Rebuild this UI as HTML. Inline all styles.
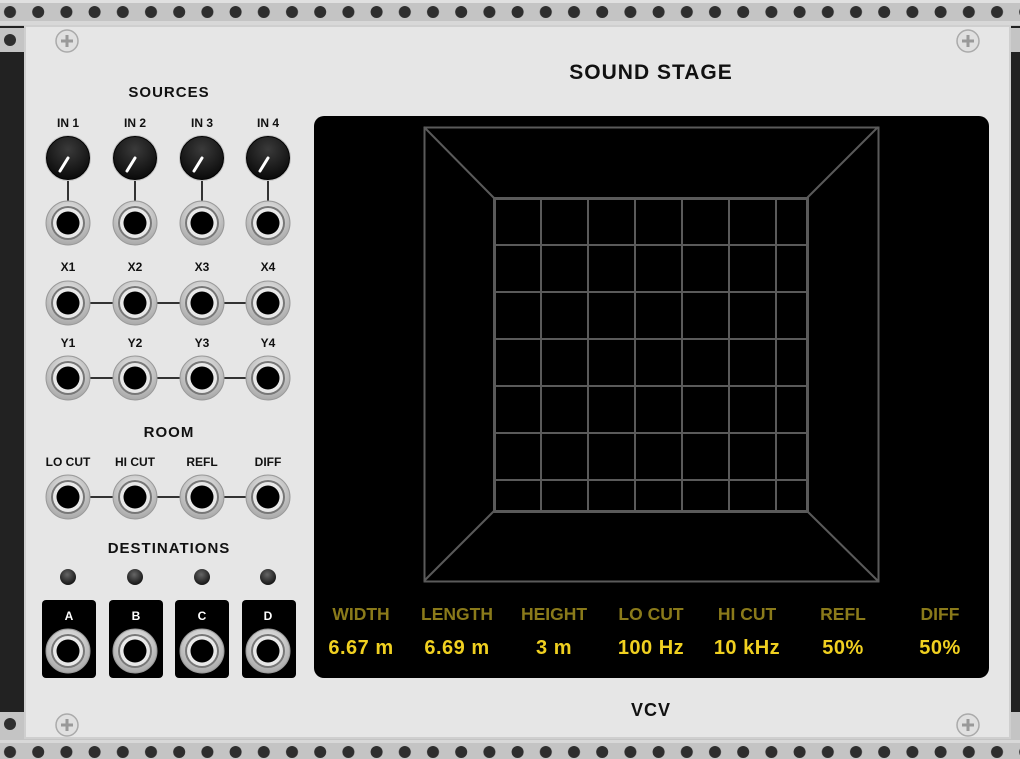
<!DOCTYPE html>
<html><head><style>
html,body{margin:0;padding:0;width:1020px;height:759px;overflow:hidden;background:#2a2a2a}
svg text{font-family:"Liberation Sans",sans-serif;font-weight:bold}
</style></head><body>
<svg width="1020" height="759" viewBox="0 0 1020 759" xmlns="http://www.w3.org/2000/svg">
<defs>
<radialGradient id="jg" cx="50%" cy="35%" r="65%"><stop offset="0" stop-color="#f4f4f4"/><stop offset="1" stop-color="#a8a8a8"/></radialGradient>
<radialGradient id="kg" cx="50%" cy="30%" r="70%"><stop offset="0" stop-color="#3a3a3a"/><stop offset="1" stop-color="#0a0a0a"/></radialGradient>
<radialGradient id="lg" cx="45%" cy="35%" r="60%"><stop offset="0" stop-color="#666"/><stop offset="1" stop-color="#1a1a1a"/></radialGradient>
<g id="jack">
<circle r="22" fill="url(#jg)" stroke="#999" stroke-width="1"/>
<circle r="17" fill="#777"/>
<circle r="15" fill="#e8e8e8"/>
<circle r="11.5" fill="#000"/>
</g>
<g id="knob">
<circle r="23" fill="#c4c4c4"/>
<circle r="21.5" fill="url(#kg)" stroke="#000" stroke-width="1"/>
<line x1="0" y1="0" x2="-8" y2="13" stroke="#fff" stroke-width="3" stroke-linecap="round"/>
</g>
<g id="screw"><circle r="11" fill="#e0e0e0" stroke="#aaa" stroke-width="1.5"/><path d="M-6 0H6M0 -6V6" stroke="#999" stroke-width="3"/></g>
<pattern id="holesT" x="-4" y="5" width="28.2" height="14" patternUnits="userSpaceOnUse"><circle cx="14" cy="7" r="6" fill="#2e2e2e"/></pattern>
<pattern id="holesB" x="-4" y="745" width="28.2" height="14" patternUnits="userSpaceOnUse"><circle cx="14" cy="7" r="6" fill="#2e2e2e"/></pattern>
</defs>
<!-- rails -->
<rect x="0" y="0" width="1020" height="26" fill="#c4c4c4"/>
<rect x="0" y="0" width="1020" height="3" fill="#e0e0e0"/>
<rect x="0" y="21" width="1020" height="4" fill="#d8d8d8"/>
<rect x="0" y="5" width="1020" height="14" fill="url(#holesT)"/>
<rect x="0" y="738" width="1020" height="21" fill="#c4c4c4"/>
<rect x="0" y="740" width="1020" height="3" fill="#d8d8d8"/>
<rect x="0" y="745" width="1020" height="14" fill="url(#holesB)"/>
<rect x="0" y="26" width="25" height="712" fill="#222"/>
<rect x="0" y="28" width="25" height="24" fill="#c4c4c4"/>
<circle cx="10" cy="40" r="6" fill="#2e2e2e"/>
<rect x="0" y="712" width="25" height="26" fill="#c4c4c4"/>
<circle cx="10" cy="724" r="6" fill="#2e2e2e"/>
<rect x="1010" y="26" width="10" height="712" fill="#222"/>
<rect x="1010" y="28" width="10" height="24" fill="#c4c4c4"/>
<rect x="1010" y="712" width="10" height="26" fill="#c4c4c4"/>
<!-- panel -->
<rect x="25" y="26" width="985" height="712" fill="#e6e6e6"/>
<rect x="25" y="26" width="985" height="712" fill="none" stroke="#cfcfcf" stroke-width="2"/>
<use href="#screw" x="67" y="41"/><use href="#screw" x="968" y="41"/>
<use href="#screw" x="67" y="725"/><use href="#screw" x="968" y="725"/>
<text x="651" y="79" font-size="21" text-anchor="middle" fill="#111" style="letter-spacing:1px">SOUND STAGE</text>
<text x="169" y="97" font-size="15" text-anchor="middle" fill="#111" style="letter-spacing:1px">SOURCES</text>
<g font-size="12" text-anchor="middle" fill="#111">
<text x="68" y="127">IN 1</text><text x="135" y="127">IN 2</text><text x="202" y="127">IN 3</text><text x="268" y="127">IN 4</text>
<text x="68" y="271">X1</text><text x="135" y="271">X2</text><text x="202" y="271">X3</text><text x="268" y="271">X4</text>
<text x="68" y="347">Y1</text><text x="135" y="347">Y2</text><text x="202" y="347">Y3</text><text x="268" y="347">Y4</text>
<text x="68" y="466">LO CUT</text><text x="135" y="466">HI CUT</text><text x="202" y="466">REFL</text><text x="268" y="466">DIFF</text>
</g>
<text x="169" y="437" font-size="15" text-anchor="middle" fill="#111" style="letter-spacing:1px">ROOM</text>
<text x="169" y="553" font-size="15" text-anchor="middle" fill="#111" style="letter-spacing:1px">DESTINATIONS</text>
<g stroke="#333" stroke-width="2">
<line x1="68" y1="158" x2="68" y2="223"/><line x1="135" y1="158" x2="135" y2="223"/><line x1="202" y1="158" x2="202" y2="223"/><line x1="268" y1="158" x2="268" y2="223"/>
<line x1="68" y1="303" x2="268" y2="303"/><line x1="68" y1="378" x2="268" y2="378"/><line x1="68" y1="497" x2="268" y2="497"/>
</g>
<use href="#knob" x="68" y="158"/><use href="#knob" x="135" y="158"/><use href="#knob" x="202" y="158"/><use href="#knob" x="268" y="158"/>
<use href="#jack" x="68" y="223"/><use href="#jack" x="135" y="223"/><use href="#jack" x="202" y="223"/><use href="#jack" x="268" y="223"/>
<use href="#jack" x="68" y="303"/><use href="#jack" x="135" y="303"/><use href="#jack" x="202" y="303"/><use href="#jack" x="268" y="303"/>
<use href="#jack" x="68" y="378"/><use href="#jack" x="135" y="378"/><use href="#jack" x="202" y="378"/><use href="#jack" x="268" y="378"/>
<use href="#jack" x="68" y="497"/><use href="#jack" x="135" y="497"/><use href="#jack" x="202" y="497"/><use href="#jack" x="268" y="497"/>
<g>
<circle cx="68" cy="577" r="8" fill="url(#lg)"/><circle cx="135" cy="577" r="8" fill="url(#lg)"/><circle cx="202" cy="577" r="8" fill="url(#lg)"/><circle cx="268" cy="577" r="8" fill="url(#lg)"/>
</g>
<g fill="#000">
<rect x="42" y="600" width="54" height="78" rx="4"/><rect x="109" y="600" width="54" height="78" rx="4"/><rect x="175" y="600" width="54" height="78" rx="4"/><rect x="242" y="600" width="54" height="78" rx="4"/>
</g>
<g font-size="12" text-anchor="middle" fill="#fff">
<text x="69" y="620">A</text><text x="136" y="620">B</text><text x="202" y="620">C</text><text x="268" y="620">D</text>
</g>
<use href="#jack" x="68" y="651"/><use href="#jack" x="135" y="651"/><use href="#jack" x="202" y="651"/><use href="#jack" x="268" y="651"/>
<!-- display -->
<rect x="314" y="116" width="675" height="562" rx="10" fill="#000"/>
<g stroke="#5a5a5a" fill="none">
<rect x="424.5" y="127.5" width="454" height="454" stroke-width="2"/>
<line x1="424" y1="127" x2="494" y2="198" stroke-width="2"/><line x1="878" y1="127" x2="807" y2="198" stroke-width="2"/>
<line x1="424" y1="581" x2="494" y2="511" stroke-width="2"/><line x1="878" y1="581" x2="807" y2="511" stroke-width="2"/>
<rect x="494.5" y="198.5" width="313" height="313" stroke-width="3"/>
<g stroke-width="2">
<line x1="541" y1="198" x2="541" y2="511"/><line x1="588" y1="198" x2="588" y2="511"/><line x1="635" y1="198" x2="635" y2="511"/><line x1="682" y1="198" x2="682" y2="511"/><line x1="729" y1="198" x2="729" y2="511"/><line x1="776" y1="198" x2="776" y2="511"/>
<line x1="494" y1="245" x2="807" y2="245"/><line x1="494" y1="292" x2="807" y2="292"/><line x1="494" y1="339" x2="807" y2="339"/><line x1="494" y1="386" x2="807" y2="386"/><line x1="494" y1="433" x2="807" y2="433"/><line x1="494" y1="480" x2="807" y2="480"/>
</g></g>
<g text-anchor="middle">
<g font-size="17.5" fill="#8a7a1a">
<text x="361" y="620">WIDTH</text><text x="457" y="620">LENGTH</text><text x="554" y="620">HEIGHT</text><text x="651" y="620">LO CUT</text><text x="747" y="620">HI CUT</text><text x="843" y="620">REFL</text><text x="940" y="620">DIFF</text>
</g>
<g font-size="20" fill="#f0d020" style="letter-spacing:0.5px">
<text x="361" y="654">6.67 m</text><text x="457" y="654">6.69 m</text><text x="554" y="654">3 m</text><text x="651" y="654">100 Hz</text><text x="747" y="654">10 kHz</text><text x="843" y="654">50%</text><text x="940" y="654">50%</text>
</g></g>
<text x="651" y="716" font-size="18" text-anchor="middle" fill="#111" style="font-weight:900;letter-spacing:1px">VCV</text>
</svg>
</body></html>
